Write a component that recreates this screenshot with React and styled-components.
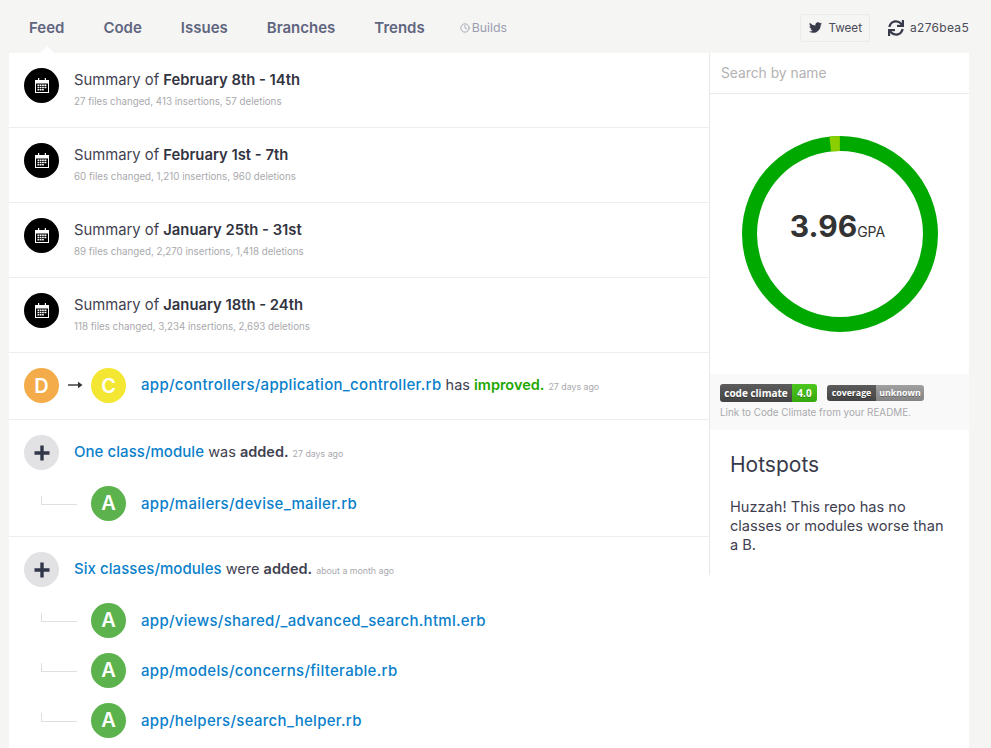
import React from 'react';
import styled, { createGlobalStyle } from 'styled-components';
import { FaTwitter, FaSync } from 'react-icons/fa';
import { FiClock } from 'react-icons/fi';

const GlobalStyle = createGlobalStyle`
  html, body {
    margin: 0;
    height: 748px;
    overflow: hidden;
    background: #f5f5f3;
    font-family: 'Inter', 'Liberation Sans', sans-serif;
    color: #383a4a;
  }
  * { box-sizing: border-box; }
`;

const Page = styled.div`
  width: 960px;
  margin-left: 9px;
`;

const TopBar = styled.div`
  height: 53px;
  display: flex;
  align-items: center;
  justify-content: space-between;
  padding: 2px 0 0 20px;
`;

const Tabs = styled.nav`
  display: flex;
  align-items: center;
  gap: 39px;
`;

const Tab = styled.a`
  position: relative;
  font-size: 15px;
  font-weight: 600;
  color: #5f6580;

  ${(p) =>
    p.$active &&
    `&::after {
      content: '';
      position: absolute;
      left: 50%;
      bottom: -16px;
      margin-left: -7px;
      border: 7px solid transparent;
      border-top: 0;
      border-bottom-color: #fff;
    }`}
`;

const BuildsTab = styled.a`
  display: flex;
  align-items: center;
  gap: 2px;
  margin-left: -4px;
  font-size: 12.3px;
  color: #9a9eb0;
`;

const TopActions = styled.div`
  display: flex;
  align-items: center;
  gap: 18px;
`;

const TweetButton = styled.a`
  display: flex;
  align-items: center;
  gap: 6px;
  height: 28px;
  padding: 0 7px 0 8px;
  font-size: 11.7px;
  color: #4a4c5a;
  border: 1px solid #ebebeb;
  border-radius: 3px;
`;

const Commit = styled.a`
  display: flex;
  align-items: center;
  gap: 6px;
  font-size: 12px;
  letter-spacing: 0.3px;
  color: #4a4c5a;
`;

const Panel = styled.div`
  display: flex;
  align-items: flex-start;
  background: #fff;
  height: 695px;
`;

const Feed = styled.div`
  width: 700px;
  flex: none;
`;

const Row = styled.div`
  display: flex;
  align-items: flex-start;
  height: ${(p) => p.$height}px;
  padding: 15px 15px 0;
`;

const Group = styled.div`
  height: ${(p) => p.$height}px;
  border-bottom: 1px solid #eeeeee;
`;

const Circle = styled.div`
  flex: none;
  width: 35px;
  height: 35px;
  border-radius: 50%;
  display: flex;
  align-items: center;
  justify-content: center;
  background: ${(p) => p.$bg};
  color: #fff;
  font-size: 20px;
  font-weight: 600;
`;

const RowBody = styled.div`
  margin: 2px 0 0 15px;
`;

const SummaryTitle = styled.div`
  font-size: 14.8px;
  line-height: 20px;
  color: #3f4150;

  b {
    font-weight: 600;
    color: #32343f;
  }
`;

const Stats = styled.div`
  margin-top: 5px;
  font-size: 9.75px;
  line-height: 14px;
  color: #a9a9ad;
`;

const Arrow = styled.svg`
  flex: none;
  width: 15px;
  height: 10px;
  margin: 12px 8px 0 9px;
`;

const RepoLine = styled.div`
  margin: ${(p) => (p.$child ? '2px' : '0')} 0 0 15px;
  font-size: 14.5px;
  line-height: 34px;
  color: #3f4150;

  b {
    font-weight: 600;
  }
`;

const RepoLink = styled.a`
  font-size: 15px;
  font-weight: 500;
  letter-spacing: ${(p) => (p.$file ? '0.3px' : '0.05px')};
  color: #0a7fcb;
`;

const Good = styled.b`
  color: #21a800;
`;

const Ago = styled.span`
  margin-left: 4px;
  font-size: 8.8px;
  color: #a9a9ad;
`;

const ChildRow = styled.div`
  display: flex;
  align-items: center;
  height: 50px;
  padding-left: 32px;
`;

const Elbow = styled.div`
  flex: none;
  width: 36px;
  height: 9px;
  margin: -5px 14px 0 0;
  border-left: 1px solid #dfdfe2;
  border-bottom: 1px solid #dfdfe2;
`;

const Sidebar = styled.aside`
  width: 260px;
  height: 522px;
  flex: none;
  border-left: 1px solid #e8e8e8;
`;

const Search = styled.div`
  height: 41px;
  padding: 0 11px;
  display: flex;
  align-items: center;
  font-size: 13.8px;
  color: #b2b2b2;
  border-bottom: 1px solid #eaeaea;
`;

const Gauge = styled.div`
  position: relative;
  height: 280px;
  display: flex;
  align-items: center;
  justify-content: center;
`;

const GaugeLabel = styled.div`
  position: absolute;
  inset: 0;
  display: flex;
  align-items: baseline;
  justify-content: center;
  padding: 114px 4px 0 0;
  font-size: 30px;
  font-weight: 700;
  color: #333;

  span {
    font-size: 14px;
    font-weight: 400;
  }
`;

const BadgeBox = styled.div`
  height: 56px;
  padding: 10px 10px 0;
  background: #f9f9f9;
`;

const Badges = styled.div`
  display: flex;
  align-items: center;
  gap: 10px;
`;

const Badge = styled.div`
  display: flex;
  height: ${(p) => p.$height}px;
  border-radius: 3px;
  overflow: hidden;
  font-family: 'Open Sans', sans-serif;
  font-weight: 700;
  font-size: ${(p) => p.$size}px;
  line-height: ${(p) => p.$height}px;
  white-space: nowrap;
  color: #fff;
  text-shadow: 0 1px 0 rgba(0, 0, 0, 0.3);
`;

const BadgePart = styled.div`
  width: ${(p) => p.$width}px;
  text-align: center;
  background: ${(p) => p.$bg};
`;

const BadgeHint = styled.div`
  margin-top: 3px;
  font-size: 9.85px;
  line-height: 14px;
  color: #a9a9ad;
`;

const Hotspots = styled.div`
  padding: 21px 20px 0;
`;

const HotspotsTitle = styled.h2`
  margin: 0;
  font-size: 21px;
  line-height: 27px;
  font-weight: 400;
  color: #383a4a;
`;

const HotspotsText = styled.p`
  margin: 20px 0 0;
  font-size: 14.6px;
  line-height: 19px;
  color: #3f4150;
`;

const PlusIcon = () => (
  <svg width="16" height="16" viewBox="0 0 16 16">
    <path d="M6.3 0.5h3.4v5.8h5.8v3.4H9.7v5.8H6.3V9.7H0.5V6.3h5.8z" fill="#32364a" />
  </svg>
);

const CalendarIcon = () => (
  <svg width="14" height="15" viewBox="0 0 14 15">
    <path d="M3 0h1.2v2h5.6V0H11v2h3v13H0V2h3z" fill="#fff" />
    <rect x="1" y="5.5" width="12" height="8.5" fill="#000" />
    <path
      d="M2.5 6.5h1.7v1.5H2.5zM4.8 6.5h1.7v1.5H4.8zM7.1 6.5h1.7v1.5H7.1zM9.4 6.5h2v1.5h-2zM2.5 8.7h1.7v1.5H2.5zM4.8 8.7h1.7v1.5H4.8zM7.1 8.7h1.7v1.5H7.1zM9.4 8.7h2v1.5h-2zM2.5 10.9h1.7v1.5H2.5zM4.8 10.9h1.7v1.5H4.8zM7.1 10.9h1.7v1.5H7.1z"
      fill="#fff"
    />
  </svg>
);

const summaries = [
  { range: 'February 8th - 14th', stats: '27 files changed, 413 insertions, 57 deletions' },
  { range: 'February 1st - 7th', stats: '60 files changed, 1,210 insertions, 960 deletions' },
  { range: 'January 25th - 31st', stats: '89 files changed, 2,270 insertions, 1,418 deletions' },
  { range: 'January 18th - 24th', stats: '118 files changed, 3,234 insertions, 2,693 deletions' },
];

const SummaryRow = ({ range, stats }) => (
  <Group $height={75}>
    <Row $height={74}>
      <Circle $bg="#000">
        <CalendarIcon />
      </Circle>
      <RowBody>
        <SummaryTitle>
          Summary of <b>{range}</b>
        </SummaryTitle>
        <Stats>{stats}</Stats>
      </RowBody>
    </Row>
  </Group>
);

const AddedFile = ({ path }) => (
  <ChildRow>
    <Elbow />
    <Circle $bg="#5cb34d">A</Circle>
    <RepoLine $child>
      <RepoLink $file>{path}</RepoLink>
    </RepoLine>
  </ChildRow>
);

const App = () => {
  const r = 90.5;
  const full = 2 * Math.PI * r;
  const segment = full * 0.0172;

  return (
    <Page>
      <GlobalStyle />
      <TopBar>
        <Tabs>
          <Tab $active>Feed</Tab>
          <Tab>Code</Tab>
          <Tab>Issues</Tab>
          <Tab>Branches</Tab>
          <Tab>Trends</Tab>
          <BuildsTab>
            <FiClock size={10} />
            Builds
          </BuildsTab>
        </Tabs>
        <TopActions>
          <TweetButton>
            <FaTwitter size={13} color="#383a4a" />
            Tweet
          </TweetButton>
          <Commit>
            <FaSync size={16} color="#383a4a" />
            a276bea5
          </Commit>
        </TopActions>
      </TopBar>
      <Panel>
        <Feed>
          {summaries.map((s) => (
            <SummaryRow key={s.range} {...s} />
          ))}
          <Group $height={67}>
            <Row $height={66}>
              <Circle $bg="#f4ac4a">D</Circle>
              <Arrow viewBox="0 0 15 10">
                <path d="M0 5h12" stroke="#333" strokeWidth="1.4" />
                <path d="M10 1.8L14.5 5 10 8.2z" fill="#333" />
              </Arrow>
              <Circle $bg="#f4e733">C</Circle>
              <RepoLine>
                <RepoLink $file>app/controllers/application_controller.rb</RepoLink> has <Good>improved.</Good>
                <Ago>27 days ago</Ago>
              </RepoLine>
            </Row>
          </Group>
          <Group $height={117}>
            <Row $height={58}>
              <Circle $bg="#e2e2e4">
                <PlusIcon />
              </Circle>
              <RepoLine>
                <RepoLink>One class/module</RepoLink> was <b>added.</b>
                <Ago>27 days ago</Ago>
              </RepoLine>
            </Row>
            <AddedFile path="app/mailers/devise_mailer.rb" />
          </Group>
          <Row $height={58}>
            <Circle $bg="#e2e2e4">
              <PlusIcon />
            </Circle>
            <RepoLine>
              <RepoLink>Six classes/modules</RepoLink> were <b>added.</b>
              <Ago>about a month ago</Ago>
            </RepoLine>
          </Row>
          <AddedFile path="app/views/shared/_advanced_search.html.erb" />
          <AddedFile path="app/models/concerns/filterable.rb" />
          <AddedFile path="app/helpers/search_helper.rb" />
        </Feed>
        <Sidebar>
          <Search>Search by name</Search>
          <Gauge>
            <svg width="196" height="196" viewBox="0 0 196 196">
              <circle cx="98" cy="98" r={r} fill="none" stroke="#00a900" strokeWidth="15" />
              <circle
                cx="98"
                cy="98"
                r={r}
                fill="none"
                stroke="#8bcf00"
                strokeWidth="15"
                strokeDasharray={`${segment} ${full - segment}`}
                transform={`rotate(${-90 - 6.2} 98 98)`}
              />
            </svg>
            <GaugeLabel>
              3.96<span>GPA</span>
            </GaugeLabel>
          </Gauge>
          <BadgeBox>
            <Badges>
              <Badge $height={18} $size={10}>
                <BadgePart $width={72} $bg="linear-gradient(#5c5c5c, #444)">code climate</BadgePart>
                <BadgePart $width={25} $bg="linear-gradient(#4cc71e, #36a80f)">4.0</BadgePart>
              </Badge>
              <Badge $height={16} $size={8.8}>
                <BadgePart $width={49} $bg="linear-gradient(#5c5c5c, #444)">coverage</BadgePart>
                <BadgePart $width={48} $bg="linear-gradient(#a0a0a0, #848484)">unknown</BadgePart>
              </Badge>
            </Badges>
            <BadgeHint>Link to Code Climate from your README.</BadgeHint>
          </BadgeBox>
          <Hotspots>
            <HotspotsTitle>Hotspots</HotspotsTitle>
            <HotspotsText>Huzzah! This repo has no classes or modules worse than a B.</HotspotsText>
          </Hotspots>
        </Sidebar>
      </Panel>
    </Page>
  );
};

export default App;
